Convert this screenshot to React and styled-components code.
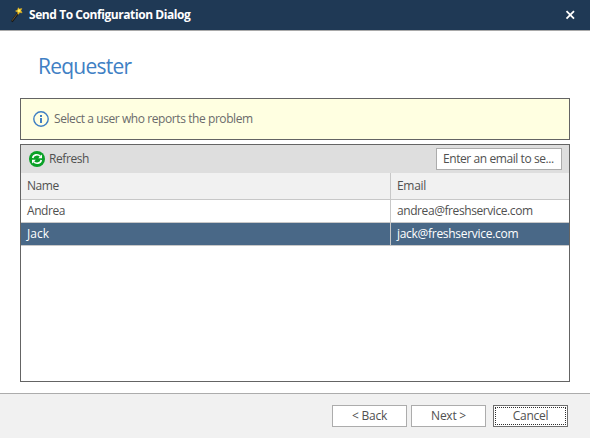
import React from 'react';
import styled, { createGlobalStyle } from 'styled-components';

const GlobalStyle = createGlobalStyle`
  *, *::before, *::after { box-sizing: border-box; }
  body { margin: 0; background: #fff; overflow: hidden; }
`;

const Dialog = styled.div`
  width: 590px;
  height: 438px;
  display: flex;
  flex-direction: column;
  background: #fff;
  color: #505050;
  font: 12px/16px "Open Sans", "Noto Sans", sans-serif;
  white-space: nowrap;
`;

const TitleBar = styled.header`
  height: 31px;
  flex: none;
  display: flex;
  align-items: center;
  padding: 0 14px 0 10px;
  background: #1f3955;
  border-bottom: 1px solid #a9a9a9;
`;

const Title = styled.h1`
  flex: 1;
  margin: 0 0 0 6px;
  color: #fff;
  font-size: 12px;
  font-weight: 700;
  line-height: 16px;
  letter-spacing: -0.43px;
`;

const CloseButton = styled.button`
  display: flex;
  padding: 0;
  border: 0;
  background: none;
`;

const Content = styled.main`
  flex: 1;
  padding: 0 20px;
`;

const Heading = styled.h2`
  height: 67px;
  margin: 0;
  padding: 20px 0 0 18px;
  color: #4080c4;
  font-size: 21px;
  font-weight: 400;
  line-height: 30px;
  letter-spacing: -0.75px;
`;

const Notice = styled.section`
  height: 42px;
  display: flex;
  align-items: center;
  gap: 5px;
  padding-left: 12px;
  border: 1px solid #646464;
  background: #ffffe1;
  color: #6b6b6b;
`;

const Label = styled.span`
  letter-spacing: ${(p) => p.$tracking ?? -0.42}px;
`;

const Panel = styled.section`
  height: 238px;
  margin-top: 4px;
  border: 1px solid #646464;
`;

const Toolbar = styled.div`
  height: 28px;
  display: flex;
  align-items: center;
  justify-content: space-between;
  padding: 0 7px 0 8px;
  background: #dedede;
`;

const ToolButton = styled.button`
  display: flex;
  align-items: center;
  gap: 4px;
  padding: 0;
  border: 0;
  background: none;
  color: inherit;
  font: inherit;
`;

const SearchBox = styled.div`
  width: 126px;
  height: 22px;
  padding: 2px 0 0 6px;
  border: 1px solid #acacac;
  background: #fff;
`;

const Row = styled.div`
  height: ${(p) => (p.$header ? 27 : 23)}px;
  display: grid;
  grid-template-columns: 370px 1fr;
  background: ${(p) => (p.$header ? '#f1f1f1' : p.$selected ? '#496887' : '#fff')};
  color: ${(p) => (p.$selected ? '#fff' : 'inherit')};
  border-bottom: 1px solid #c8c8c8;
`;

const Cell = styled.div`
  display: flex;
  align-items: center;
  padding-left: 6px;
  &:first-child { border-right: 1px solid #c8c8c8; }
`;

const Footer = styled.footer`
  height: 45px;
  flex: none;
  display: flex;
  justify-content: flex-end;
  padding: 11px 22px 0 0;
  background: #f1f1f1;
  border-top: 1px solid #acacac;
`;

const Button = styled.button`
  width: 75px;
  height: 22px;
  margin-left: ${(p) => (p.$focused ? 7 : 4)}px;
  padding: 0 0 1px;
  border: 1px solid ${(p) => (p.$focused ? '#6e6e6e' : '#acacac')};
  background: #fff;
  color: inherit;
  font: inherit;
  letter-spacing: -0.25px;
  outline: ${(p) => (p.$focused ? '1px dotted #303030' : 'none')};
  outline-offset: -3px;
`;

const WandIcon = () => (
  <svg width="13" height="17" viewBox="0 0 13 17">
    <path d="M1.8 14.6 8.2 6" stroke="#171a1c" strokeWidth="2.2" />
    <path d="M2 13.8 8 5.8" stroke="#6b5228" strokeWidth="1" />
    <path d="m8.2 .8 1.3 1.3 2.3-.5-.9 2 1.2 2.2-2.4-.3-1.4 1.9-.7-2.4-2.1-1 2.2-.9z" fill="#edbd22" stroke="#edbd22" strokeWidth="0.5" />
    <circle cx="9" cy="3.8" r="1.3" fill="#fff36b" />
  </svg>
);

const CloseIcon = () => (
  <svg width="11" height="10" viewBox="0 0 11 10">
    <path d="m1.5 1.2 7.5 7.5m0-7.5-7.5 7.5" stroke="#fff" strokeWidth="1.8" />
  </svg>
);

const InfoIcon = () => (
  <svg width="16" height="16" viewBox="0 0 16 16">
    <circle cx="8" cy="8" r="7.2" fill="none" stroke="#3f7fc3" strokeWidth="1.4" />
    <path d="M7 4h2v2H7zM7 7h2v5H7z" fill="#3f7fc3" />
  </svg>
);

const RefreshIcon = () => (
  <svg width="16" height="16" viewBox="0 0 16 16">
    <circle cx="8" cy="8" r="8" fill="#0aa127" />
    <path d="M3.7 7C4.4 3.5 9 2.7 11.3 5.3M12.3 9c-.7 3.5-5.3 4.3-7.6 1.7" fill="none" stroke="#fff" strokeWidth="1.6" />
    <path d="M13 3.4v3.8H9.2zM3 12.6V8.8h3.8z" fill="#fff" />
  </svg>
);

const users = [
  { name: 'Andrea', email: 'andrea@freshservice.com' },
  { name: 'Jack', nameTracking: 0, email: 'jack@freshservice.com', emailTracking: -0.29, selected: true },
];

export default function App() {
  return (
    <Dialog>
      <GlobalStyle />
      <TitleBar>
        <WandIcon />
        <Title>Send To Configuration Dialog</Title>
        <CloseButton aria-label="Close"><CloseIcon /></CloseButton>
      </TitleBar>
      <Content>
        <Heading>Requester</Heading>
        <Notice>
          <InfoIcon />
          <Label>Select a user who reports the problem</Label>
        </Notice>
        <Panel>
          <Toolbar>
            <ToolButton><RefreshIcon /><Label>Refresh</Label></ToolButton>
            <SearchBox><Label>Enter an email to se...</Label></SearchBox>
          </Toolbar>
          <Row $header>
            <Cell><Label>Name</Label></Cell>
            <Cell><Label $tracking={-0.3}>Email</Label></Cell>
          </Row>
          {users.map((u) => (
            <Row key={u.name} $selected={u.selected}>
              <Cell><Label $tracking={u.nameTracking}>{u.name}</Label></Cell>
              <Cell><Label $tracking={u.emailTracking}>{u.email}</Label></Cell>
            </Row>
          ))}
        </Panel>
      </Content>
      <Footer>
        <Button>&lt; Back</Button>
        <Button>Next &gt;</Button>
        <Button $focused>Cancel</Button>
      </Footer>
    </Dialog>
  );
}
